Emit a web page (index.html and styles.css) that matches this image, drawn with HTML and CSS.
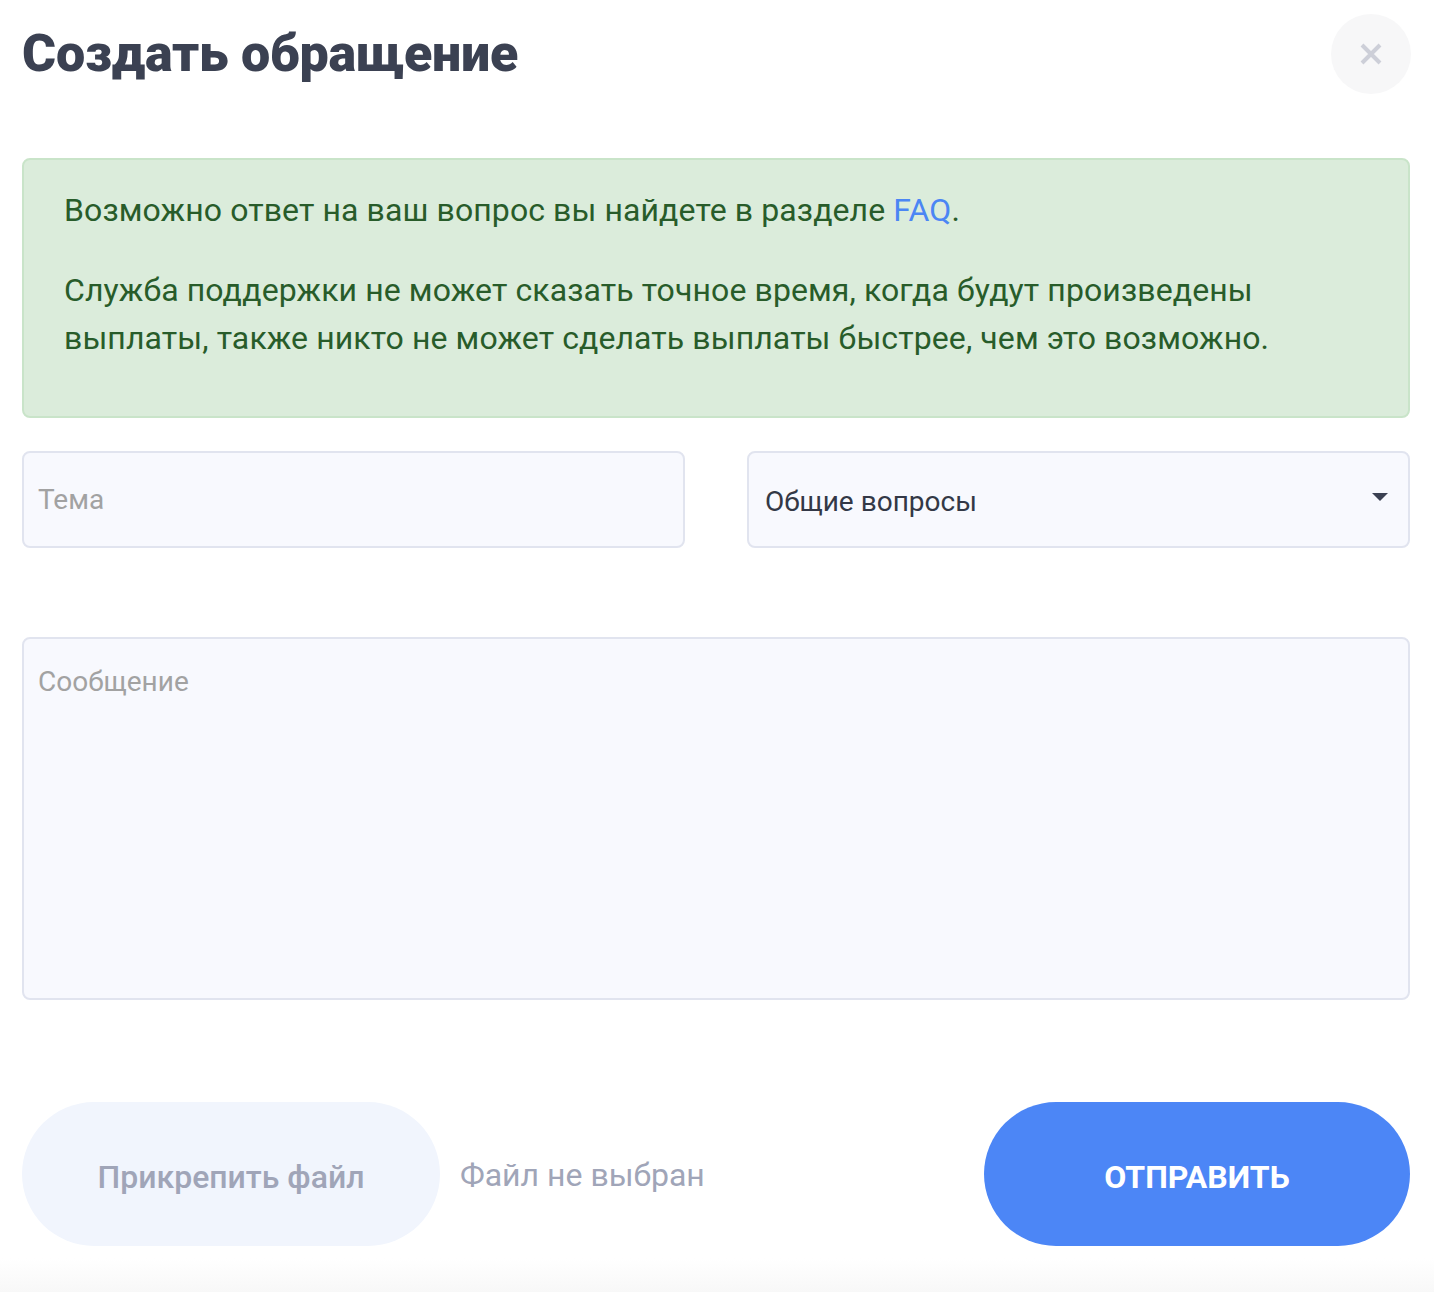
FILE: index.html
```html
<!DOCTYPE html>
<html lang="ru">
<head>
<meta charset="utf-8">
<title>Создать обращение</title>
<link rel="stylesheet" href="styles.css">
</head>
<body>
<div class="modal">
  <div class="header">
    <h1 class="title">Создать обращение</h1>
    <button class="close" type="button" aria-label="Закрыть">
      <svg width="24" height="24" viewBox="0 0 24 24"><path d="M3 3L21 21M21 3L3 21" stroke="#cdcfd8" stroke-width="4" stroke-linecap="butt"/></svg>
    </button>
  </div>
  <div class="alert">
    <p>Возможно ответ на ваш вопрос вы найдете в разделе <a href="#">FAQ</a>.</p>
    <p>Служба поддержки не может сказать точное время, когда будут произведены выплаты, также никто не может сделать выплаты быстрее, чем это возможно.</p>
  </div>
  <div class="row">
    <div class="field"><span class="placeholder">Тема</span></div>
    <div class="field select"><span class="value">Общие вопросы</span><span class="caret"></span></div>
  </div>
  <div class="textarea"><span class="placeholder">Сообщение</span></div>
  <div class="actions">
    <div class="file">
      <button class="attach" type="button">Прикрепить файл</button>
      <span class="file-name">Файл не выбран</span>
    </div>
    <button class="send" type="button">ОТПРАВИТЬ</button>
  </div>
</div>
<div class="footer-shade"></div>
</body>
</html>
```
FILE: styles.css
```css
html, body {
  margin: 0;
  padding: 0;
  background: #ffffff;
  font-family: Roboto, "Noto Sans", Arial, sans-serif;
}
.modal {
  padding: 14px 24px 0 22px;
  height: 1258px;
  box-sizing: border-box;
}
.header {
  display: flex;
  align-items: center;
  justify-content: space-between;
  height: 80px;
}
.title {
  margin: 0;
  font-size: 52px;
  font-weight: 900;
  color: #3b4152;
  line-height: 60px;
  letter-spacing: -0.2px;
}
.close {
  width: 80px;
  height: 80px;
  border-radius: 50%;
  border: none;
  background: #f7f7f8;
  display: flex;
  align-items: center;
  justify-content: center;
  margin-right: -1px;
  padding: 0;
}
.alert {
  margin-top: 64px;
  background: #dbecdb;
  border: 2px solid #c9e4c9;
  border-radius: 8px;
  padding: 26px 40px 22px 40px;
  color: #285c2a;
  font-size: 32px;
  font-weight: 400;
  letter-spacing: 0.1px;
  line-height: 48px;
}
.alert p {
  margin: 0 0 32px 0;
}
.alert a {
  color: #4b86f4;
  text-decoration: none;
}
.row {
  display: grid;
  grid-template-columns: 1fr 1fr;
  column-gap: 62px;
  margin-top: 33px;
}
.field {
  height: 97px;
  box-sizing: border-box;
  border: 2px solid #e1e4ef;
  border-radius: 8px;
  background: #f8f9fe;
  display: flex;
  align-items: center;
  padding: 0 14px;
  font-size: 28px;
}
.placeholder {
  color: #a2a2a2;
}
.select {
  justify-content: space-between;
  padding: 0 20px 0 16px;
}
.select .value {
  color: #333846;
  margin-top: 4px;
}
.caret {
  width: 0;
  height: 0;
  border-left: 8px solid transparent;
  border-right: 8px solid transparent;
  border-top: 8px solid #3b4152;
  margin-top: -6px;
}
.textarea {
  margin-top: 89px;
  height: 363px;
  box-sizing: border-box;
  border: 2px solid #e1e4ef;
  border-radius: 8px;
  background: #f8f9fe;
  padding: 26px 14px;
  font-size: 28px;
  line-height: 34px;
}
.actions {
  margin-top: 102px;
  display: flex;
  align-items: center;
  justify-content: space-between;
}
.file {
  display: flex;
  align-items: center;
  gap: 20px;
}
.attach {
  width: 418px;
  height: 144px;
  border: none;
  border-radius: 72px;
  background: #f1f5fd;
  color: #a0a5b8;
  font-family: inherit;
  font-size: 32px;
  font-weight: 500;
  padding: 6px 0 0 0;
}
.file-name {
  color: #a0a5b8;
  font-size: 32px;
  margin-top: 2px;
}
.send {
  width: 426px;
  height: 144px;
  border: none;
  border-radius: 72px;
  background: #4c86f6;
  color: #ffffff;
  font-family: inherit;
  font-size: 32px;
  font-weight: 700;
  padding: 6px 0 0 0;
}
.footer-shade {
  height: 34px;
  background: linear-gradient(#ffffff, #f8f8f8);
}
```
